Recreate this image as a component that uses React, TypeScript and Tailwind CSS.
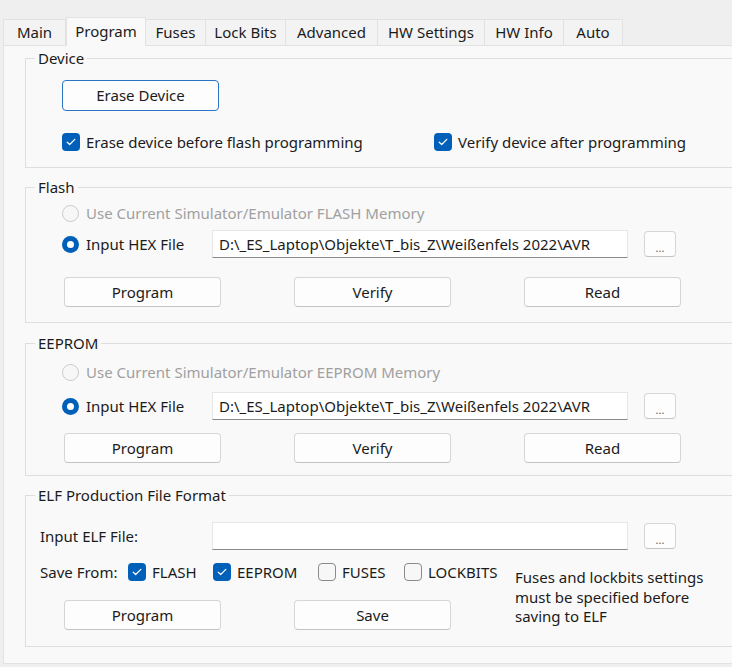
import React from "react";

const HEX_PATH = "D:\\_ES_Laptop\\Objekte\\T_bis_Z\\Weißenfels 2022\\AVR";

const TABS = [
  { name: "Main", w: "w-[63px]" },
  { name: "Program", w: "w-[80px]" },
  { name: "Fuses", w: "w-[60px]" },
  { name: "Lock Bits", w: "w-[80px]" },
  { name: "Advanced", w: "w-[92px]" },
  { name: "HW Settings", w: "w-[107px]" },
  { name: "HW Info", w: "w-[79px]" },
  { name: "Auto", w: "w-[59px]" },
];

function Tab({ name, w, active, first }: { name: string; w: string; active: boolean; first: boolean }) {
  if (active) {
    return (
      <div className={`${w} flex h-[29px] shrink-0 items-start justify-center border-x border-t border-[#e2e2e2] bg-[#f9f9f9] pt-[2px]`}>
        {name}
      </div>
    );
  }
  return (
    <div
      className={`${w} flex h-[27px] shrink-0 items-center justify-center border-y border-r border-[#e2e2e2] bg-[#f3f3f3] ${first ? "border-l" : ""}`}
    >
      {name}
    </div>
  );
}

function Button({ label, className = "" }: { label: string; className?: string }) {
  return (
    <button
      className={`h-[30px] w-[157px] rounded-[4px] border border-[#d6d6d6] border-b-[#c4c4c4] bg-[#fdfdfd] text-[15px] text-[#1b1b1b] ${className}`}
    >
      {label}
    </button>
  );
}

function DotsButton() {
  return (
    <button className="ml-[16px] h-[26px] w-[32px] rounded-[4px] border border-[#d6d6d6] border-b-[#c4c4c4] bg-[#fdfdfd] pt-[6px] text-[11px] leading-none text-[#5a5a5a]">
      ...
    </button>
  );
}

function PathBox({ value }: { value: string }) {
  return (
    <div className="flex h-[28px] w-[416px] items-center overflow-hidden whitespace-nowrap border border-[#e6e6e6] border-b-[#8a8a8a] bg-white px-[6px]">
      {value}
    </div>
  );
}

function Check({ checked, label, className = "" }: { checked: boolean; label: string; className?: string }) {
  return (
    <label className={`flex items-center gap-[6px] ${className}`}>
      {checked ? (
        <span className="flex h-[18px] w-[18px] shrink-0 items-center justify-center rounded-[4px] bg-[#005fb8]">
          <svg width="10" height="8" viewBox="0 0 10 8">
            <path d="M1.2 4.2 3.7 6.5 8.8 1.3" fill="none" stroke="#fff" strokeWidth="1.2" strokeLinecap="round" strokeLinejoin="round" />
          </svg>
        </span>
      ) : (
        <span className="h-[18px] w-[18px] shrink-0 rounded-[4px] border border-[#8b8b8b] bg-[#f7f7f7]" />
      )}
      <span>{label}</span>
    </label>
  );
}

function Radio({ checked, disabled, label, className = "" }: { checked?: boolean; disabled?: boolean; label: string; className?: string }) {
  return (
    <label className={`flex items-center gap-[7px] ${disabled ? "text-[#a0a0a0]" : ""} ${className}`}>
      {checked ? (
        <span className="flex h-[17px] w-[17px] shrink-0 items-center justify-center rounded-full bg-[#005fb8]">
          <span className="h-[7px] w-[7px] rounded-full bg-white" />
        </span>
      ) : (
        <span className="h-[17px] w-[17px] shrink-0 rounded-full border border-[#cacaca] bg-[#f7f7f7]" />
      )}
      <span>{label}</span>
    </label>
  );
}

function Group({ title, className, children }: { title: string; className: string; children: React.ReactNode }) {
  return (
    <fieldset className={`w-[740px] border border-[#dedede] ${className}`}>
      <legend className="ml-[9px] px-[3px] leading-[20px]">{title}</legend>
      {children}
    </fieldset>
  );
}

// one memory section (Flash / EEPROM): source choice, hex path and actions
function MemorySection({ title, memory, className, gaps }: { title: string; memory: string; className: string; gaps: [string, string, string] }) {
  return (
    <Group title={title} className={className}>
      <div className="pl-[36px]">
        <Radio disabled label={`Use Current Simulator/Emulator ${memory} Memory`} className={`h-[20px] ${gaps[0]}`} />
        <div className={`flex items-center ${gaps[1]}`}>
          <Radio checked label="Input HEX File" className="w-[150px]" />
          <PathBox value={HEX_PATH} />
          <DotsButton />
        </div>
        <div className={`flex gap-[73px] pl-[2px] ${gaps[2]}`}>
          <Button label="Program" />
          <Button label="Verify" />
          <Button label="Read" />
        </div>
      </div>
    </Group>
  );
}

export default function App() {
  return (
    <div className="h-[667px] w-[732px] overflow-hidden bg-[#efefef] font-['Noto_Sans',sans-serif] text-[15px] text-[#1b1b1b]">
      {/* tab strip */}
      <div className="flex h-[46px] items-end pl-[3px]">
        {TABS.map((t, i) => (
          <Tab key={t.name} name={t.name} w={t.w} active={t.name === "Program"} first={i === 0} />
        ))}
        <div className="h-[1px] flex-1 bg-[#e2e2e2]" />
      </div>

      {/* Program page */}
      <div className="ml-[3px] h-[618px] w-[760px] border-x border-b border-[#e2e2e2] bg-[#f9f9f9] pl-[21px] pt-[2px]">
        <Group title="Device" className="h-[120px]">
          <div className="pl-[36px]">
            <button className="mt-[12px] h-[31px] w-[157px] rounded-[4px] border border-[#2a74c4] bg-[#fdfdfd]">Erase Device</button>
            <div className="mt-[22px] flex h-[18px] items-center">
              <Check checked label="Erase device before flash programming" className="w-[372px]" />
              <Check checked label="Verify device after programming" />
            </div>
          </div>
        </Group>

        <MemorySection title="Flash" memory="FLASH" className="mt-[9px] h-[146px]" gaps={["mt-[6px]", "mt-[7px]", "mt-[19px]"]} />
        <MemorySection title="EEPROM" memory="EEPROM" className="mt-[10px] h-[143px]" gaps={["mt-[9px]", "mt-[10px]", "mt-[13px]"]} />

        <Group title="ELF Production File Format" className="mt-[9px] h-[162px]">
          <div className="pl-[14px]">
            <div className="mt-[17px] flex items-center">
              <span className="w-[172px]">Input ELF File:</span>
              <PathBox value="" />
              <DotsButton />
            </div>
            <div className="mt-[12px] flex items-start">
              <div className="w-[475px]">
                <div className="flex h-[20px] items-center">
                  <span className="w-[88px]">Save From:</span>
                  <Check checked label="FLASH" className="w-[85px]" />
                  <Check checked label="EEPROM" className="w-[105px]" />
                  <Check checked={false} label="FUSES" className="w-[86px]" />
                  <Check checked={false} label="LOCKBITS" />
                </div>
                <div className="mt-[18px] flex gap-[73px] pl-[24px]">
                  <Button label="Program" />
                  <Button label="Save" />
                </div>
              </div>
              <p className="mt-[6px] w-[206px] leading-[19.5px]">
                Fuses and lockbits settings must be specified before saving to ELF
              </p>
            </div>
          </div>
        </Group>
      </div>
    </div>
  );
}
